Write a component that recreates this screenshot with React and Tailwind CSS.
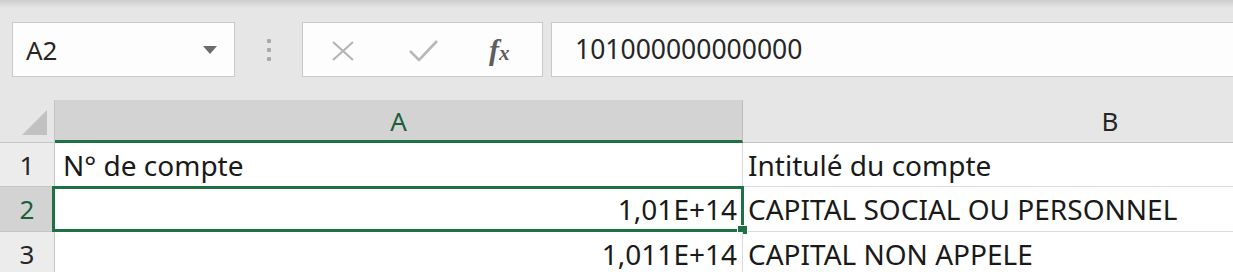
import React from 'react';

const cellFont = { fontFamily: '"Noto Sans", "Liberation Sans", sans-serif' };

function NameBox() {
  return (
    <div className="flex h-[55px] w-[223px] items-center justify-between border border-[#c9c9c9] bg-[#fdfdfd] pl-[13px] pr-[17px]">
      <span className="text-[26px] leading-none text-[#262626]">A2</span>
      <svg width="14" height="8" viewBox="0 0 14 8">
        <polygon points="0,0 14,0 7,8" fill="#6b6b6b" />
      </svg>
    </div>
  );
}

function Dots() {
  return (
    <div className="flex w-[67px] flex-col items-center gap-[5px]">
      <span className="h-[4px] w-[4px] rounded-[1px] bg-[#a9a9a9]" />
      <span className="h-[4px] w-[4px] rounded-[1px] bg-[#a9a9a9]" />
      <span className="h-[4px] w-[4px] rounded-[1px] bg-[#a9a9a9]" />
    </div>
  );
}

function FormulaButtons() {
  return (
    <div className="flex h-[55px] w-[241px] items-center border border-[#c9c9c9] bg-[#fdfdfd] pl-[27px]">
      {/* cancel */}
      <svg width="26" height="20" viewBox="0 0 26 20" className="mt-[2px]">
        <path d="M3 1 L23 19 M23 1 L3 19" stroke="#b3b3b3" strokeWidth="2" fill="none" />
      </svg>
      {/* enter */}
      <svg width="31" height="24" viewBox="0 0 31 24" className="ml-[52px]">
        <path d="M2 13 L11 22 L29 3" stroke="#b8b8b8" strokeWidth="2.6" fill="none" strokeLinejoin="round" />
      </svg>
      {/* insert function */}
      <span
        className="ml-[50px] text-[30px] font-semibold italic leading-none text-[#5e5e5e]"
        style={{ fontFamily: '"Liberation Serif", serif' }}
      >
        f<span className="text-[21px]">x</span>
      </span>
    </div>
  );
}

function Toolbar() {
  return (
    <div className="h-[100px] bg-[#e6e6e6]">
      <div className="h-[8px] bg-gradient-to-b from-[#cdcdcd] to-[#e6e6e6]" />
      <div className="flex items-center pl-[12px] pt-[14px]" style={cellFont}>
        <NameBox />
        <Dots />
        <FormulaButtons />
        <div className="ml-[8px] flex h-[55px] flex-1 items-center border border-[#c9c9c9] border-r-0 bg-[#fdfdfd] pl-[23px]">
          <span className="text-[26.5px] leading-none text-[#262626]">101000000000000</span>
        </div>
      </div>
    </div>
  );
}

function HeaderRow() {
  return (
    <div className="flex h-[43px]">
      <div className="flex w-[55px] shrink-0 items-end justify-end border-r border-b border-[#c4c4c4] bg-[#e6e6e6] pr-[7px] pb-[7px]">
        <svg width="25" height="25" viewBox="0 0 25 25">
          <polygon points="25,0 25,25 0,25" fill="#c1c1c1" />
        </svg>
      </div>
      <div className="flex w-[688px] shrink-0 items-center justify-center border-r border-b-[3px] border-r-[#bdbdbd] border-b-[#1e7145] bg-[#d3d3d3] pt-[1px]">
        <span className="text-[26px] leading-none text-[#1b5e3a]">A</span>
      </div>
      <div className="flex w-[734px] shrink-0 items-center justify-center border-b border-[#c4c4c4] bg-[#e6e6e6]">
        <span className="text-[26px] leading-none text-[#262626]">B</span>
      </div>
    </div>
  );
}

function Row({ num, height, selected, a, aRight, b }) {
  return (
    <div className="flex" style={{ height }}>
      <div
        className={
          selected
            ? 'flex w-[55px] shrink-0 items-center justify-center border-r border-b border-[#c4c4c4] bg-[#d3d3d3]'
            : 'flex w-[55px] shrink-0 items-center justify-center border-r border-b border-[#c4c4c4] bg-[#ececec]'
        }
      >
        <span className={selected ? 'text-[26px] leading-none text-[#1b5e3a]' : 'text-[26px] leading-none text-[#262626]'}>
          {num}
        </span>
      </div>
      <div
        className={
          aRight
            ? 'relative flex w-[688px] shrink-0 items-center justify-end border-r border-b border-[#dadada] bg-white pr-[5px]'
            : 'relative flex w-[688px] shrink-0 items-center border-r border-b border-[#dadada] bg-white pl-[8px]'
        }
      >
        <span className="text-[28px] leading-none text-[#1a1a1a]">{a}</span>
        {selected && (
          <>
            <div className="pointer-events-none absolute -top-[1px] -bottom-[1px] -left-[3px] -right-[2px] border-[3px] border-[#1e7145]" />
            <div className="absolute -right-[6px] -bottom-[4px] h-[10px] w-[11px] border border-white bg-[#1e7145]" />
          </>
        )}
      </div>
      <div className="flex w-[734px] shrink-0 items-center border-b border-[#dadada] bg-white pl-[5px]">
        <span className="text-[28px] leading-none text-[#1a1a1a]">{b}</span>
      </div>
    </div>
  );
}

export default function App() {
  return (
    <div className="h-[272px] w-[1233px] overflow-hidden bg-white">
      <Toolbar />
      <div style={cellFont}>
        <HeaderRow />
        <Row num="1" height={44} a="N° de compte" b="Intitulé du compte" />
        <Row num="2" height={45} selected aRight a="1,01E+14" b="CAPITAL SOCIAL OU PERSONNEL" />
        <Row num="3" height={45} aRight a="1,011E+14" b="CAPITAL NON APPELE" />
      </div>
    </div>
  );
}
